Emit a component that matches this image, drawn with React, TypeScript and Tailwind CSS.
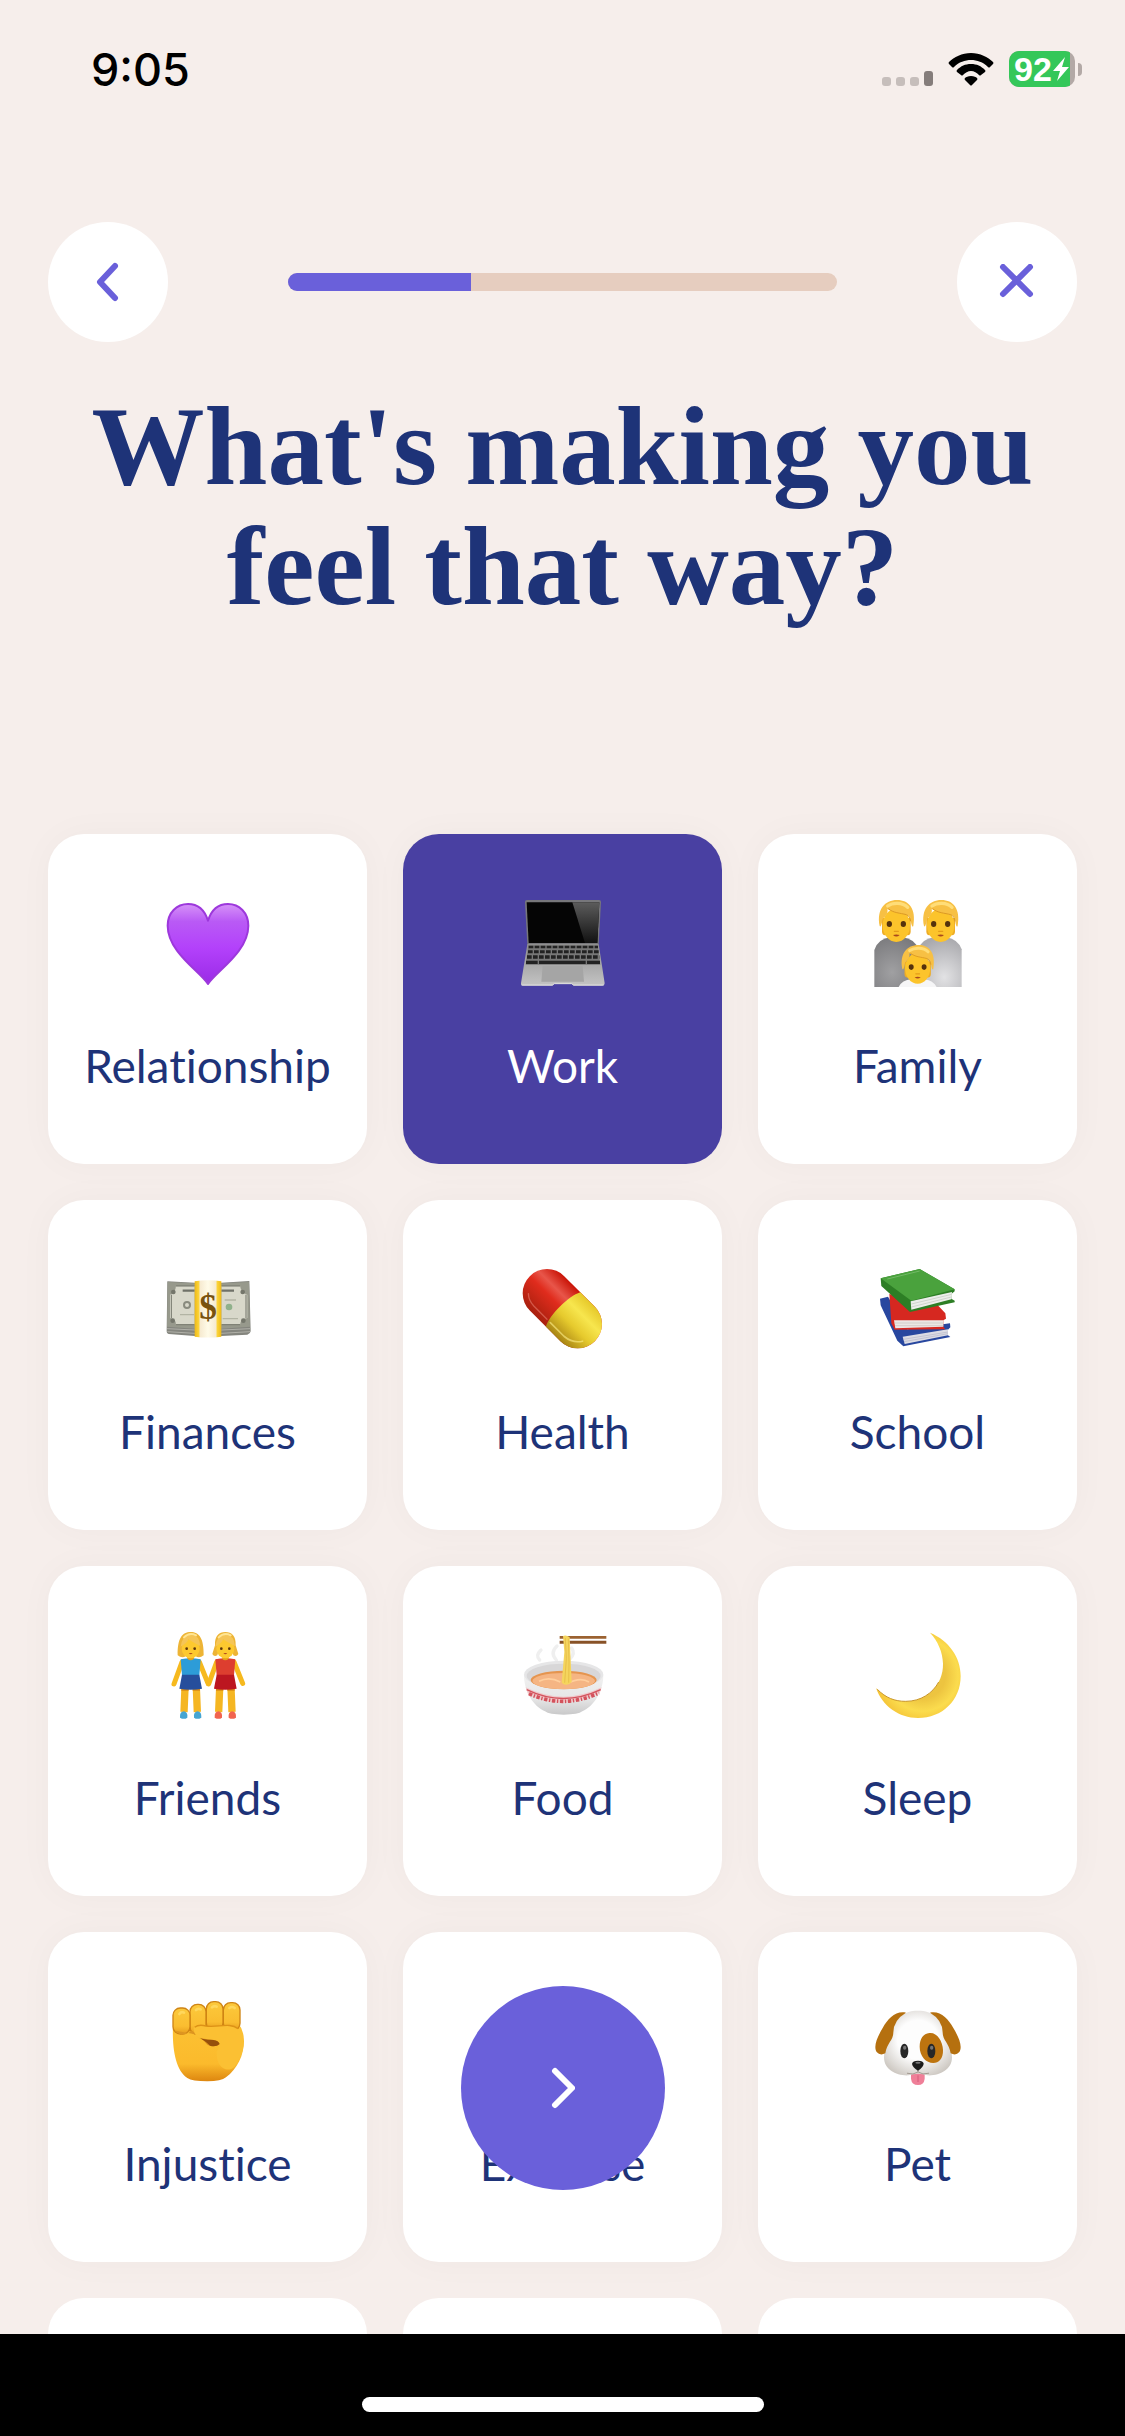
import { useState, type ReactNode } from "react";
import clsx from "clsx";

function Emoji({ children }: { children?: ReactNode }) {
  return (
    <svg viewBox="0 0 264 264" className="size-[88px] shrink-0" aria-hidden="true">
      {children}
    </svg>
  );
}

function Heart() {
  return (
    <Emoji>
      <defs>
        <linearGradient id="heart" x1="0" y1="0" x2="0" y2="1">
          <stop offset="0" stopColor="#d692f8" />
          <stop offset="0.22" stopColor="#b95af5" />
          <stop offset="0.55" stopColor="#b341fb" />
          <stop offset="1" stopColor="#9a2be6" />
        </linearGradient>
      </defs>
      <path
        d="M132 252C108 214 11 156 11 77C11 38 38 12 72 12C100 12 122 30 132 62C142 30 164 12 192 12C226 12 253 38 253 77C253 156 156 214 132 252Z"
        fill="url(#heart)"
        stroke="#9d38dc"
        strokeWidth="6"
        strokeLinejoin="round"
      />
    </Emoji>
  );
}

function Laptop() {
  return (
    <Emoji>
      <defs>
        <linearGradient id="glare" x1="0" y1="0" x2="0" y2="1">
          <stop offset="0" stopColor="#5c5c5c" />
          <stop offset="1" stopColor="#121212" />
        </linearGradient>
        <linearGradient id="base" x1="0" y1="0" x2="0" y2="1">
          <stop offset="0" stopColor="#8e8e8e" />
          <stop offset="1" stopColor="#c4c4c4" />
        </linearGradient>
      </defs>
      <path d="M24 0H240Q246 0 246 6L239 134H25L18 6Q18 0 24 0Z" fill="#77777b" />
      <path d="M23 7H241L235 129H29Z" fill="#050505" />
      <path d="M160 7H241L235 129H198Z" fill="url(#glare)" />
      <path d="M25 132H239L257 250Q257 257 250 257H164L158 252H106L100 257H12Q5 257 6 250Z" fill="url(#base)" />
      <path d="M28 136H236L244 194H20Z" fill="#777" />
      <g stroke="#222" strokeDasharray="14 4">
        <path d="M29 141H237" strokeWidth="7" />
        <path d="M27 155H239" strokeWidth="9" />
        <path d="M24 171H241" strokeWidth="10" />
      </g>
      <path d="M21 187H56M60 187H200M204 187H243" stroke="#222" strokeWidth="10" />
      <path d="M71 198H191L195 245H67Z" fill="#a5a5a5" />
      <path d="M8 255H100L106 251H158L164 255H254" stroke="#dedede" strokeWidth="3" fill="none" />
    </Emoji>
  );
}

function Face({ x, y, s = 1 }: { x: number; y: number; s?: number }) {
  return (
    <g transform={`translate(${x} ${y}) scale(${s})`}>
      <path d="M-43 -10H43V30Q43 42 34 42H-34Q-43 42 -43 30Z" fill="#eeac25" />
      <ellipse cx="0" cy="12" rx="41" ry="50" fill="#fcc42b" />
      <path d="M-50 14C-60 -36 -34 -64 2 -64C38 -64 60 -38 51 14C48 20 44 8 43 -8C40 -17 32 -20 18 -23C-2 -26 -18 -30 -27 -37C-24 -24 -32 -14 -41 -8C-43 4 -46 20 -50 14Z" fill="#f7c044" />
      <path d="M-24 -38C-10 -25 12 -25 30 -20C38 -17 42 -10 43 0" stroke="#dc9a25" strokeWidth="3" fill="none" />
      <path d="M-26 -46C-12 -56 18 -58 34 -42" stroke="#ffdd78" strokeWidth="10" strokeLinecap="round" fill="none" />
      <ellipse cx="-21" cy="8" rx="8" ry="9" fill="#54320d" />
      <ellipse cx="21" cy="8" rx="8" ry="9" fill="#54320d" />
      <path d="M-6 30H6" stroke="#e39c19" strokeWidth="4" strokeLinecap="round" />
      <path d="M-10 41Q0 38 10 41Q0 50 -10 41Z" fill="#a9491d" />
    </g>
  );
}

function Family() {
  return (
    <Emoji>
      <defs>
        <radialGradient id="coatDark" cx="0.4" cy="0.7" r="0.8">
          <stop offset="0" stopColor="#a0a0a2" />
          <stop offset="1" stopColor="#77777a" />
        </radialGradient>
        <radialGradient id="coatLight" cx="0.6" cy="0.8" r="0.8">
          <stop offset="0" stopColor="#e2e2e4" />
          <stop offset="1" stopColor="#a9a9ad" />
        </radialGradient>
      </defs>
      <path d="M1 261V150Q12 116 50 112H84Q124 116 134 150V261Z" fill="url(#coatDark)" />
      <path d="M132 261V150Q142 116 182 112H218Q252 118 263 148V261Z" fill="url(#coatLight)" />
      <Face x={67} y={64} />
      <Face x={200} y={64} />
      <path d="M74 261Q84 240 112 238H150Q176 240 188 261Z" fill="#f6f6f7" />
      <Face x={131} y={194} s={0.92} />
    </Emoji>
  );
}

function Money() {
  return (
    <Emoji>
      <defs>
        <linearGradient id="band" x1="0" y1="0" x2="1" y2="0">
          <stop offset="0" stopColor="#eeb916" />
          <stop offset="0.16" stopColor="#fcd53c" />
          <stop offset="0.2" stopColor="#f6ead0" />
          <stop offset="0.5" stopColor="#fffbe8" />
          <stop offset="0.8" stopColor="#f6ead0" />
          <stop offset="0.84" stopColor="#fcd53c" />
          <stop offset="1" stopColor="#eeb916" />
        </linearGradient>
      </defs>
      <path d="M10 46L92 50H172L256 45L260 196Q259 204 250 206L172 210H92L14 204Q7 202 8 192Z" fill="#84857e" />
      <path d="M9 188L92 192H172L259 188M10 197L92 202H172L258 197" stroke="#b0b0a8" strokeWidth="3" fill="none" />
      <path d="M11 48L92 52H172L255 48L258 182L172 188H92L9 182Z" fill="#97998c" />
      <path d="M36 60H92V176H36Q36 158 18 156V86Q34 82 36 60Z" fill="#d8d8ca" />
      <path d="M228 60H172V176H228Q230 158 250 156V86Q232 82 228 60Z" fill="#d8d8ca" />
      <path d="M36 60H92M172 60H228M36 176H92M172 176H228M22 86V156M246 86V156" stroke="#73756a" strokeWidth="3" />
      <path d="M56 74H92M172 74H210" stroke="#6f7168" strokeWidth="7" />
      <path d="M48 146H90M176 158H222M182 102H216" stroke="#b2b4a4" strokeWidth="4" />
      <circle cx="69" cy="117" r="9" fill="none" stroke="#898b7e" strokeWidth="6" />
      <circle cx="195" cy="123" r="10" fill="#8fb18b" />
      <g fill="#74766b">
        <circle cx="28" cy="78" r="7" />
        <circle cx="26" cy="164" r="7" />
        <circle cx="236" cy="78" r="7" />
        <circle cx="238" cy="164" r="7" />
      </g>
      <path d="M92 46Q132 40 172 46V212Q132 217 92 212Z" fill="url(#band)" />
      <text x="132" y="158" textAnchor="middle" fontFamily="Liberation Serif, serif" fontWeight="bold" fontSize="106" fill="#79520f">
        $
      </text>
    </Emoji>
  );
}

function Pill() {
  return (
    <Emoji>
      <defs>
        <linearGradient id="pillRed" x1="0" y1="0" x2="0" y2="1">
          <stop offset="0" stopColor="#c91407" />
          <stop offset="0.3" stopColor="#e8564a" />
          <stop offset="0.5" stopColor="#e02c1d" />
          <stop offset="1" stopColor="#a8200e" />
        </linearGradient>
        <linearGradient id="pillYellow" x1="0" y1="0" x2="0" y2="1">
          <stop offset="0" stopColor="#e6c829" />
          <stop offset="0.3" stopColor="#f7e64e" />
          <stop offset="0.6" stopColor="#e6ca2d" />
          <stop offset="1" stopColor="#a88413" />
        </linearGradient>
      </defs>
      <g transform="translate(130 128) rotate(45)">
        <rect x="-138" y="-73" width="276" height="146" rx="73" fill="url(#pillRed)" />
        <path d="M3 -73H65A73 73 0 0 1 65 73H3C-14 40 -14 -40 3 -73Z" fill="url(#pillYellow)" />
        <path d="M-104 40Q-90 54 -66 55H-10" stroke="#ef8d80" strokeWidth="4" strokeLinecap="round" fill="none" opacity="0.5" />
        <path d="M4 55H62Q96 52 112 26" stroke="#fff08a" strokeWidth="5" strokeLinecap="round" fill="none" opacity="0.6" />
      </g>
    </Emoji>
  );
}

function Books() {
  return (
    <Emoji>
      <path d="M18 98L42 92L100 190L228 172L229 184L222 191V208L229 213L88 241L70 224L20 118Z" fill="#28479f" />
      <path d="M86 212L222 190V208L92 234Z" fill="#dcdce4" />
      <path d="M88 220L222 198M90 227L222 203" stroke="#b5b7c8" strokeWidth="2" />
      <path d="M46 84L190 116L214 142L216 158L208 163V182L214 190L62 191L52 172Z" fill="#d62820" />
      <path d="M60 163H208V182L64 187Z" fill="#ebe7e5" />
      <path d="M62 171H208M63 179H208" stroke="#c9c2c0" strokeWidth="2" />
      <path d="M20 37L137 9L242 70V76L232 84V98L242 104V109L108 138L22 60Z" fill="#2d7e25" />
      <path d="M20 37L137 9L242 70L112 104Z" fill="#4aa23d" />
      <path d="M110 106L234 78L232 100L112 131Z" fill="#eceeea" />
      <path d="M112 114L233 85M112 123L232 93" stroke="#bfc7bd" strokeWidth="2" />
      <path d="M40 39L137 15" stroke="#71b965" strokeWidth="3" />
    </Emoji>
  );
}

function Girl({ x, top, skirt, shoes, bunches = false }: { x: number; top: string; skirt: string; shoes: string; bunches?: boolean }) {
  return (
    <g transform={`translate(${x} 0)`}>
      <path d="M-26 90L-50 156M26 90L52 154" stroke="#f6b91e" strokeWidth="15" strokeLinecap="round" />
      <path d="M-17 168L-20 240M17 168L20 240" stroke="#f5b622" strokeWidth="22" />
      <path d="M-28 173H-6M6 173H28" stroke="#d98a13" strokeWidth="6" />
      <path d="M-32 257Q-33 238 -20 238Q-8 240 -10 257Q-20 264 -32 257Z" fill={shoes} />
      <path d="M32 257Q33 238 20 238Q8 240 10 257Q20 264 32 257Z" fill={shoes} />
      <path d="M-30 82Q0 76 30 82L26 130H-26Z" fill={top} />
      <path d="M-26 128H26L34 170Q0 176 -34 170Z" fill={skirt} />
      <path d="M-10 68H10V80Q0 90 -10 80Z" fill="#e5a01a" />
      {bunches ? (
        <path d="M-31 40C-32 12 -20 0 0 0C20 0 32 12 31 40L39 66Q34 76 24 70L18 50H-18L-24 70Q-34 76 -39 66Z" fill="#edb435" />
      ) : (
        <path d="M-39 70C-40 20 -26 0 0 0C26 0 40 20 39 70Q26 80 14 72H-14Q-26 80 -39 70Z" fill="#edb435" />
      )}
      <ellipse cx="0" cy="50" rx="27" ry="29" fill="#fdc92f" />
      <path d="M-30 44Q-10 34 -7 22Q8 32 29 42Q26 8 0 8Q-25 8 -30 44Z" fill="#f5c557" />
      <path d="M-20 16Q-4 0 16 10" stroke="#ffe593" strokeWidth="6" strokeLinecap="round" fill="none" />
      <circle cx="-12" cy="50" r="4" fill="#5c360c" />
      <circle cx="12" cy="50" r="4" fill="#5c360c" />
      <path d="M-6 64Q0 62 6 64Q0 70 -6 64Z" fill="#b04a1d" />
    </g>
  );
}

function Friends() {
  return (
    <Emoji>
      <Girl x={80} top="#2d9cd8" skirt="#264e9c" shoes="#45a5d3" />
      <Girl x={184} top="#dd3e2f" skirt="#bc1620" shoes="#f1644f" bunches />
    </Emoji>
  );
}

function Noodles() {
  return (
    <Emoji>
      <defs>
        <linearGradient id="bowl" x1="0" y1="0" x2="0" y2="1">
          <stop offset="0" stopColor="#f1f1f1" />
          <stop offset="0.6" stopColor="#e6e6e6" />
          <stop offset="1" stopColor="#c9c9ca" />
        </linearGradient>
      </defs>
      <path d="M62 84Q48 70 66 54M112 84Q92 62 114 42M152 82Q170 64 158 48" stroke="#efefef" strokeWidth="10" strokeLinecap="round" fill="none" />
      <path d="M15 128C15 180 44 222 78 238Q90 248 134 248Q178 248 190 238C224 222 253 180 253 128Z" fill="url(#bowl)" />
      <ellipse cx="134" cy="128" rx="119" ry="42" fill="#e6e6e7" />
      <ellipse cx="134" cy="132" rx="111" ry="37" fill="#d8d7d8" />
      <ellipse cx="134" cy="144" rx="99" ry="28" fill="#e5954f" />
      <ellipse cx="134" cy="147" rx="94" ry="24" fill="#f5b583" />
      <path d="M60 148Q90 132 124 150M146 154Q184 134 210 150" stroke="#ffcf9d" strokeWidth="5" fill="none" />
      <path d="M122 16H262" stroke="#9b6231" strokeWidth="8" />
      <path d="M122 31H262" stroke="#885227" strokeWidth="9" />
      <path d="M132 12Q142 8 152 16L158 150Q144 166 128 152L136 60Z" fill="#f5d55d" />
      <path d="M139 18L142 80L137 152M148 20L150 90L149 152" stroke="#e8c04a" strokeWidth="3" fill="none" />
      <path d="M20 166Q132 222 248 166L242 184Q132 238 28 188Z" fill="#f0c9cb" />
      <path d="M23 173Q132 226 245 173" stroke="#d3525c" strokeWidth="4" fill="none" />
      <path d="M30 185Q132 232 240 183" stroke="#d3525c" strokeWidth="11" strokeDasharray="10 5 4 5" fill="none" />
    </Emoji>
  );
}

function Moon() {
  return (
    <Emoji>
      <defs>
        <radialGradient id="moon" cx="0.55" cy="0.5" r="0.6">
          <stop offset="0.45" stopColor="#edc440" />
          <stop offset="0.7" stopColor="#fbdc4e" />
          <stop offset="1" stopColor="#f3bd31" />
        </radialGradient>
      </defs>
      <path d="M168 2C225 26 260 76 260 132C260 205 205 258 132 258C75 258 25 222 6 168C32 196 60 208 95 208C160 208 208 158 207 95C206 60 192 28 168 2Z" fill="url(#moon)" />
      <path d="M10 172C36 198 62 208 95 208C140 208 176 184 194 150" stroke="#c9962a" strokeWidth="3" fill="none" />
    </Emoji>
  );
}

function Fist() {
  return (
    <Emoji>
      <defs>
        <linearGradient id="skin" x1="0" y1="0" x2="0" y2="1">
          <stop offset="0" stopColor="#fcc233" />
          <stop offset="0.7" stopColor="#fbba2c" />
          <stop offset="1" stopColor="#dd860f" />
        </linearGradient>
        <linearGradient id="finger" x1="0" y1="0" x2="0" y2="1">
          <stop offset="0" stopColor="#fcc93c" />
          <stop offset="0.7" stopColor="#fabd30" />
          <stop offset="1" stopColor="#e79c1c" />
        </linearGradient>
      </defs>
      <path d="M27 80C24 150 34 216 70 240Q84 250 130 250Q172 250 186 238C220 214 240 170 240 130Q240 96 222 76Z" fill="url(#skin)" />
      <path d="M60 70H200V100H60Z" fill="#d18413" />
      <g fill="url(#finger)" stroke="#cf8414" strokeWidth="4">
        <rect x="178" y="14" width="50" height="84" rx="22" />
        <rect x="127" y="11" width="50" height="86" rx="22" />
        <rect x="78" y="19" width="48" height="90" rx="22" />
        <rect x="27" y="30" width="51" height="78" rx="22" />
      </g>
      <path d="M34 98Q54 122 82 98L98 108Q120 128 130 140Q150 150 170 138L164 122L110 112Z" fill="#dd9520" />
      <path d="M90 100C84 80 104 78 126 84C158 90 198 72 222 92C250 116 240 170 212 206C184 230 154 200 158 160C172 140 166 130 150 126C124 122 96 124 90 100Z" fill="#fbc033" />
      <path d="M92 88Q104 78 126 84C158 90 198 72 222 92" stroke="#dd9216" strokeWidth="4" fill="none" />
      <path d="M98 116Q112 124 148 126Q164 128 167 138Q156 148 138 143Q122 126 98 116Z" fill="#96500c" />
      <path d="M46 48Q52 40 60 44M96 36Q102 30 110 34M144 28Q150 22 158 26M196 30Q204 24 212 30" stroke="#ffd75c" strokeWidth="8" strokeLinecap="round" fill="none" />
    </Emoji>
  );
}

function Dog() {
  return (
    <Emoji>
      <defs>
        <radialGradient id="fur" cx="0.5" cy="0.45" r="0.6">
          <stop offset="0.5" stopColor="#fdfdfd" />
          <stop offset="1" stopColor="#cfcac4" />
        </radialGradient>
      </defs>
      <path d="M111 218H152V242Q150 261 132 261Q113 261 111 242Z" fill="#ef7f98" />
      <path d="M132 232V252" stroke="#d65d7b" strokeWidth="3" />
      <path d="M132 38C176 38 205 62 206 104C210 128 234 138 234 178C234 216 196 234 160 232Q132 222 104 232C68 234 30 216 30 178C30 138 54 128 58 104C59 62 88 38 132 38Z" fill="url(#fur)" />
      <path d="M96 44C64 38 42 62 26 90C8 120 -2 146 8 162Q18 174 34 166C38 136 58 126 58 104Q58 66 96 44Z" fill="#b5700f" />
      <path d="M168 44C200 38 222 62 238 90C256 120 266 146 256 162Q246 174 230 166C226 136 206 126 206 104Q206 66 168 44Z" fill="#b5700f" />
      <path d="M166 105C188 102 206 128 207 156C208 182 194 195 178 195C156 195 137 174 137 146C137 122 148 107 166 105Z" fill="#bd740f" />
      <ellipse cx="91" cy="159" rx="12" ry="22" fill="#272727" />
      <ellipse cx="172" cy="159" rx="12" ry="22" fill="#272727" />
      <ellipse cx="92" cy="149" rx="5" ry="6" fill="#757575" />
      <ellipse cx="173" cy="149" rx="5" ry="6" fill="#757575" />
      <path d="M132 210V222Q118 232 100 226M132 222Q146 232 164 226" stroke="#a39b92" strokeWidth="3" strokeLinecap="round" fill="none" />
      <path d="M114 197Q116 188 132 188Q148 188 149 197Q148 208 132 218Q115 208 114 197Z" fill="#1c1c1c" />
      <ellipse cx="132" cy="194" rx="8" ry="3" fill="#777" />
    </Emoji>
  );
}

const REASONS = [
  { label: "Relationship", icon: <Heart /> },
  { label: "Work", icon: <Laptop /> },
  { label: "Family", icon: <Family /> },
  { label: "Finances", icon: <Money /> },
  { label: "Health", icon: <Pill /> },
  { label: "School", icon: <Books /> },
  { label: "Friends", icon: <Friends /> },
  { label: "Food", icon: <Noodles /> },
  { label: "Sleep", icon: <Moon /> },
  { label: "Injustice", icon: <Fist /> },
  { label: "Exercise", icon: <Emoji /> },
  { label: "Pet", icon: <Dog /> },
];

function StatusBar() {
  return (
    <div className="flex h-[138px] shrink-0 items-center justify-between pr-[43px] pl-[91px] text-black">
      <span className="font-['Inter',sans-serif] text-[45px] leading-none font-medium">9:05</span>
      <div className="flex items-center gap-[15px]">
        <svg width="51" height="33" viewBox="0 0 51 33" aria-hidden="true">
          <rect x="0" y="24" width="9" height="9" rx="3" fill="#c6bebb" />
          <rect x="14" y="24" width="9" height="9" rx="3" fill="#c6bebb" />
          <rect x="28" y="24" width="9" height="9" rx="3" fill="#c6bebb" />
          <rect x="42" y="18" width="9" height="15" rx="3" fill="#857d7b" />
        </svg>
        <svg width="46" height="33" viewBox="0 0 46 33" aria-hidden="true">
          <path d="M23 0C32 0 40 4 45 9Q46 10 45 11L42 14Q41 15 40 14C35 9 29 7 23 7S11 9 6 14Q5 15 4 14L1 11Q0 10 1 9C6 4 14 0 23 0Z" />
          <path d="M23 11C29 11 33 13 37 17Q38 18 37 19L33 22Q32 23 31 22C29 20 26 18 23 18S17 20 15 22Q14 23 13 22L9 19Q8 18 9 17C13 13 17 11 23 11Z" />
          <path d="M23 23C26 23 28 24 29 25Q30 26 29 27L24 32Q23 33 22 32L17 27Q16 26 17 25C18 24 20 23 23 23Z" />
        </svg>
        <div className="flex items-center gap-[3px]">
          <div className="flex h-9 w-[66px] overflow-hidden rounded-[10px] bg-[#b3a9a6]">
            <div className="flex w-[61px] items-center bg-[#34c759] pl-[5px] text-white">
              <span className="font-['Liberation_Sans',sans-serif] text-[34px] leading-9 font-bold">92</span>
              <svg width="18" height="26" viewBox="0 0 18 26" className="shrink-0" aria-hidden="true">
                <path d="M13 1L1 15H8L5 25L17 11H10Z" fill="#fff" />
              </svg>
            </div>
          </div>
          <div className="h-[13px] w-1 rounded-r-full bg-[#b3a9a6]" />
        </div>
      </div>
    </div>
  );
}

export default function App() {
  const [selected, setSelected] = useState("Work");

  return (
    <div className="flex h-screen flex-col overflow-hidden bg-[#f6eeeb] text-[#1e3378]">
      <main className="relative flex min-h-0 flex-1 flex-col overflow-hidden">
        <StatusBar />

        <header className="mt-[84px] flex shrink-0 items-center px-12">
          <button type="button" aria-label="Back" className="flex size-[120px] items-center justify-center rounded-full bg-white text-[#6a60da]">
            <svg width="24" height="42" viewBox="0 0 24 42" fill="none" stroke="currentColor" strokeWidth="6" strokeLinecap="round" strokeLinejoin="round">
              <path d="M19 5L4 21L19 37" />
            </svg>
          </button>
          <div role="progressbar" aria-label="Progress" aria-valuenow={1} aria-valuemin={0} aria-valuemax={3} className="mx-[120px] h-[18px] flex-1 overflow-hidden rounded-full bg-[#e6cdbf]">
            <div className="h-full w-1/3 bg-[#6a60da]" />
          </div>
          <button type="button" aria-label="Close" className="flex size-[120px] items-center justify-center rounded-full bg-white text-[#6a60da]">
            <svg width="36" height="36" viewBox="0 0 36 36" fill="none" stroke="currentColor" strokeWidth="6" strokeLinecap="round">
              <path d="M4 3L31 30M31 3L4 30" />
            </svg>
          </button>
        </header>

        <h1 className="mt-11 shrink-0 px-12 text-center font-['Liberation_Serif',serif] text-[113px] leading-[120px] font-bold">
          What's making you
          <br />
          feel that way?
        </h1>

        <div className="mt-52 grid grid-cols-3 gap-9 px-12">
          {REASONS.map(({ label, icon }) => (
            <button
              key={label}
              type="button"
              aria-pressed={selected === label}
              onClick={() => setSelected(label)}
              className={clsx(
                "flex h-[330px] flex-col items-center rounded-[36px] pt-[66px] shadow-[0_0_36px_rgba(60,40,30,0.03)]",
                selected === label ? "bg-[#4940a2] text-white" : "bg-white",
              )}
            >
              {icon}
              <span className="mt-[42px] font-['Lato',sans-serif] text-[46px] leading-[72px] [font-variant-ligatures:none]">{label}</span>
            </button>
          ))}
          {/* next row peeks out above the bottom bar */}
          {[0, 1, 2].map((i) => (
            <div key={i} className="h-[330px] rounded-[36px] bg-white" />
          ))}
        </div>

        <button
          type="button"
          aria-label="Next"
          className="absolute bottom-36 left-1/2 flex size-[204px] -translate-x-1/2 items-center justify-center rounded-full bg-[#6a60da] text-white"
        >
          <svg width="24" height="42" viewBox="0 0 24 42" fill="none" stroke="currentColor" strokeWidth="6" strokeLinecap="round" strokeLinejoin="round">
            <path d="M4 4L21 21L4 38" />
          </svg>
        </button>
      </main>

      <footer className="flex h-[102px] shrink-0 items-end justify-center bg-black pb-6">
        <div className="h-[15px] w-[402px] rounded-full bg-white" />
      </footer>
    </div>
  );
}
